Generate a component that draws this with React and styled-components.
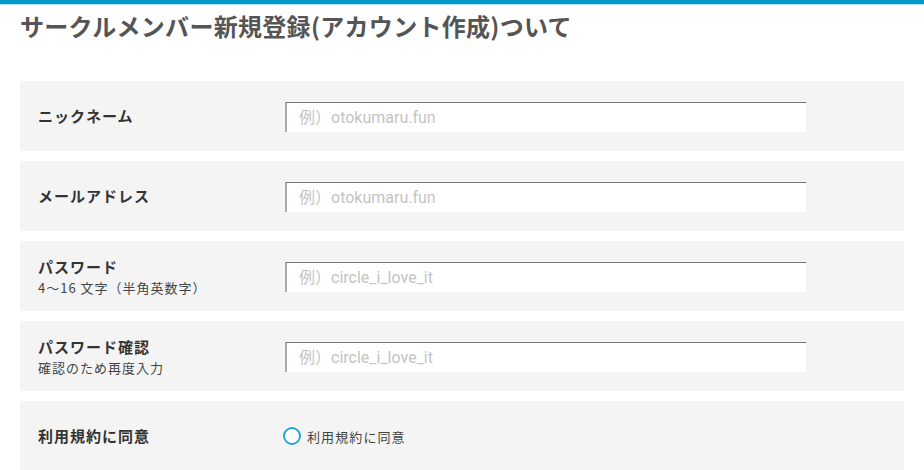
import React from "react";
import styled, { createGlobalStyle } from "styled-components";

const FIELDS = [
  { id: "nickname", label: "ニックネーム", placeholder: "例）otokumaru.fun" },
  { id: "email", label: "メールアドレス", placeholder: "例）otokumaru.fun" },
  {
    id: "password",
    label: "パスワード",
    note: "4〜16 文字（半角英数字）",
    placeholder: "例）circle_i_love_it",
  },
  {
    id: "password2",
    label: "パスワード確認",
    note: "確認のため再度入力",
    placeholder: "例）circle_i_love_it",
  },
];

export default function App() {
  return (
    <>
      <GlobalStyle />
      <Page>
        <TopBar />
        <Title>サークルメンバー新規登録(アカウント作成)ついて</Title>
        <Form>
          {FIELDS.map((f) => (
            <Row key={f.id}>
              <LabelCell>
                <Label>{f.label}</Label>
                {f.note && <Note>{f.note}</Note>}
              </LabelCell>
              <Input type="text" placeholder={f.placeholder} />
            </Row>
          ))}
          <Row>
            <LabelCell>
              <Label>利用規約に同意</Label>
            </LabelCell>
            <Agree>
              <Radio type="radio" name="agree" />
              <AgreeText>利用規約に同意</AgreeText>
            </Agree>
          </Row>
        </Form>
      </Page>
    </>
  );
}

const GlobalStyle = createGlobalStyle`
  body {
    margin: 0;
    background: #fff;
    font-family: "Noto Sans CJK JP", "Noto Sans", sans-serif;
    color: #333;
  }
`;

const Page = styled.div`
  width: 924px;
  height: 470px;
  overflow: hidden;
`;

const TopBar = styled.div`
  height: 4px;
  background: #0099cc;
  border-bottom: 1px solid #b8e2f0;
`;

const Title = styled.h1`
  margin: 0;
  padding: 6px 0 0 20px;
  height: 30px;
  font-size: 24px;
  font-weight: 700;
  line-height: 30px;
  letter-spacing: 0.3px;
  color: #555;
`;

const Form = styled.div`
  margin: 40px 20px 0 20px;
  display: flex;
  flex-direction: column;
  gap: 10px;
`;

const Row = styled.div`
  height: 70px;
  background: #f4f4f4;
  display: flex;
  align-items: center;
`;

const LabelCell = styled.div`
  width: 265px;
  padding-left: 18px;
  box-sizing: border-box;
  display: flex;
  flex-direction: column;
  justify-content: center;
`;

const Label = styled.div`
  font-size: 15px;
  font-weight: 700;
  letter-spacing: 1px;
  line-height: 22px;
  color: #333;
`;

const Note = styled.div`
  font-size: 13px;
  line-height: 19px;
  letter-spacing: 1px;
  color: #444;
`;

const Input = styled.input`
  width: 521px;
  height: 30px;
  box-sizing: border-box;
  margin-top: 2px;
  padding: 0 12px;
  border: none;
  border-top: 1px solid #777;
  border-left: 2px solid #aaa;
  background: #fff;
  font-family: Roboto, "Noto Sans CJK JP", sans-serif;
  font-size: 16px;
  color: #333;
  outline: none;

  &::placeholder {
    color: #c4c4c4;
  }
`;

const Agree = styled.label`
  display: flex;
  align-items: center;
  gap: 6px;
  margin-left: -2px;
`;

const Radio = styled.input`
  appearance: none;
  margin: 0;
  width: 18px;
  height: 18px;
  border-radius: 50%;
  border: 2px solid #29a3cf;
  background: #fff;
  box-sizing: border-box;
`;

const AgreeText = styled.span`
  font-size: 13px;
  color: #444;
  letter-spacing: 1.1px;
`;
